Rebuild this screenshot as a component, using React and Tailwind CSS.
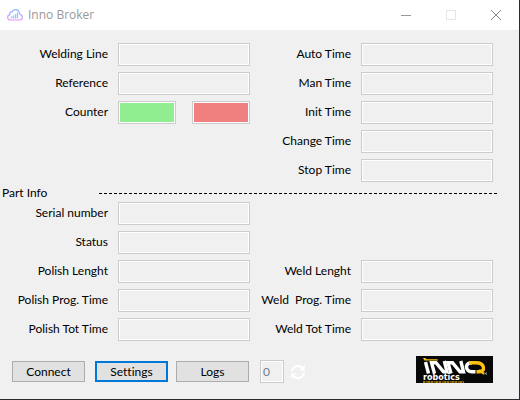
import React from "react";

const timeRows = [
  ["Welding Line", "Auto Time"],
  ["Reference", "Man Time"],
  ["Counter", "Init Time"],
  [null, "Change Time"],
  [null, "Stop Time"],
];

const partRows = [
  ["Serial number", null],
  ["Status", null],
  ["Polish Lenght", "Weld Lenght"],
  ["Polish Prog. Time", "Weld  Prog. Time"],
  ["Polish Tot Time", "Weld Tot Time"],
];

const box =
  "block h-[23px] min-w-0 rounded-none border border-[#cccccc] px-1 shadow-[inset_0_0_0_1px_#ffffff] outline-none";

function idFor(text) {
  return text.toLowerCase().replace(/[^a-z]+/g, "-");
}

function Field({ label }) {
  if (!label) {
    return (
      <>
        <span />
        <span />
      </>
    );
  }
  const id = idFor(label);
  return (
    <>
      <label htmlFor={id} className="pr-[10px] pb-[2px] text-right whitespace-pre">
        {label}
      </label>
      {label === "Counter" ? (
        <div className="flex gap-4">
          <input id={id} readOnly className={`${box} w-0 flex-1 bg-[#90ee90]`} />
          <input aria-label="Rejected counter" readOnly className={`${box} w-0 flex-1 bg-[#f08080]`} />
        </div>
      ) : (
        <input id={id} readOnly className={`${box} w-full bg-[#f0f0f0]`} />
      )}
    </>
  );
}

function FieldGrid({ rows }) {
  return (
    <div className="grid grid-cols-[118px_1fr_111px_1fr] items-center gap-y-[6px] pr-[26px]">
      {rows.map(([left, right], i) => (
        <React.Fragment key={i}>
          <Field label={left} />
          <Field label={right} />
        </React.Fragment>
      ))}
    </div>
  );
}

function CloudIcon() {
  return (
    <svg width="16" height="12" viewBox="0 0 16 12" fill="none" aria-hidden="true">
      <defs>
        <linearGradient id="cloud" x1="0" y1="0" x2="0" y2="12" gradientUnits="userSpaceOnUse">
          <stop stopColor="#7fb4ff" />
          <stop offset="0.5" stopColor="#b0a4fc" />
          <stop offset="1" stopColor="#ee94fa" />
        </linearGradient>
      </defs>
      <path
        d="M3.400 11C1.600 11 .7 9.900.7 8.300c0-1.500.8-2.300 1.900-2.600C2.400 4 3.300 2.800 4.900 2.900 5.600 1.400 6.800.7 8.400.7c2.200 0 3.600 1.300 4 3.300.1.700.3 1.100.8 1.400 1.400.4 2.100 1.400 2.100 2.700 0 1.800-1.100 2.900-2.700 2.900z"
        fill="#ffffff"
        stroke="url(#cloud)"
        strokeWidth="1.200"
      />
      <path d="M4.500 9.500V7.500M6.500 9.500V6.500M8.500 9.500V5M10.500 9.500V3.500" stroke="#a3c6fa" strokeWidth="1.400" />
    </svg>
  );
}

function InnoLogo() {
  return (
    <svg width="77" height="27" viewBox="0 0 77 27" role="img" aria-label="Inno robotics">
      <rect width="77" height="27" fill="#080808" />
      <path d="M7 2l1.500 2.500h13.500l-.6-1.200H10.500L9.500 2z" fill="#ffc20e" />
      <g stroke="#ffffff" strokeWidth="3.400" fill="none">
        <path d="M9.500 6l3 11.500" />
        <path d="M18.500 17.500L15.500 6.700H20L27.500 15.800H31L28.300 5" />
        <path d="M35 17.500L32 6.700H36.500L44 15.800H47.500L44.800 5" />
      </g>
      <path
        d="M59.500 15.800H56C51.500 15.800 49.500 11.500 51 8.800 51.900 7.200 53.500 6.700 56 6.700"
        fill="none"
        stroke="#ffffff"
        strokeWidth="3.400"
      />
      <path
        d="M53 6.700H60c4 0 6.800 1.600 7.400 4.400.7 3.200-1.400 4.700-5 4.700H60.500"
        fill="none"
        stroke="#ffc20e"
        strokeWidth="3.400"
      />
      <path d="M63 14l5 4" stroke="#ffc20e" strokeWidth="2.200" />
      <path d="M68.500 16.500l2.500 2m0-2l-2.500 2" stroke="#b0b0b0" strokeWidth=".8" />
      <text x="7" y="24" fill="#ffffff" fontFamily="DejaVu Sans, sans-serif" fontWeight="bold" fontSize="8">
        robotics
      </text>
      <path d="M7 26h41" stroke="#c8960c" strokeWidth="1.500" strokeDasharray="2 .7 1 .7 3 .6" />
    </svg>
  );
}

export default function App() {
  return (
    <main className="flex min-h-screen w-full flex-col border-r border-b border-[#2b2b2e] bg-[#f0f0f0] font-['Lato','Open_Sans',sans-serif] text-[12px] leading-4 text-black [font-variant-ligatures:none]">
      <header className="flex h-[30px] items-center bg-white pl-[7px] text-[#999999]">
        <CloudIcon />
        <h1 className="ml-[5px] flex-1 font-['Open_Sans',sans-serif]">Inno Broker</h1>
        <button aria-label="Minimize" className="flex h-[30px] w-[45px] items-center justify-center">
          <svg width="10" height="10" viewBox="0 0 10 10" stroke="#999999">
            <path d="M0 5.500h10" />
          </svg>
        </button>
        <button aria-label="Maximize" disabled className="flex h-[30px] w-[45px] items-center justify-center">
          <svg width="10" height="10" viewBox="0 0 10 10" fill="none" stroke="#e5e5e5">
            <path d="M.5.5h9v9h-9z" />
          </svg>
        </button>
        <button aria-label="Close" className="mr-px flex h-[30px] w-[45px] items-center justify-center">
          <svg width="10" height="10" viewBox="0 0 10 10" stroke="#888888">
            <path d="M0 0l10 10M10 0L0 10" />
          </svg>
        </button>
      </header>

      <form className="pt-[13px]">
        <FieldGrid rows={timeRows} />
        <div className="flex h-5 items-center pt-[2px] pr-[22px] pl-[2px]">
          <h2 className="w-24">Part Info</h2>
          <div
            role="separator"
            className="h-px flex-1 bg-[repeating-linear-gradient(90deg,transparent_0_1px,#000_1px_4px,transparent_4px_5px)]"
          />
        </div>
        <FieldGrid rows={partRows} />

        <div className="mt-[15px] flex items-end pr-[26px] pl-3">
          <div className="flex h-[23px] flex-1 items-center">
            <button type="button" className="h-[21px] w-[73px] border border-[#adadad] bg-[#e1e1e1] leading-none">
              Connect
            </button>
            <button
              type="button"
              className="ml-[10px] h-[21px] w-[73px] border-2 border-[#0078d7] bg-[#e1e1e1] leading-none"
            >
              Settings
            </button>
            <button type="button" className="ml-2 h-[21px] w-[73px] border border-[#adadad] bg-[#e1e1e1] leading-none">
              Logs
            </button>
            <input
              aria-label="Log count"
              defaultValue="0"
              disabled
              className="ml-[11px] h-[23px] w-6 border border-[#cccccc] bg-[#f0f0f0] px-[2px] text-[#6d7f92] shadow-[inset_0_0_0_1px_#ffffff]"
            />
            <button type="button" aria-label="Refresh" className="ml-[6px]">
              <svg width="16" height="16" viewBox="0 0 16 16" fill="none" stroke="#ffffff" strokeWidth="2">
                <path d="M2 7.500A6 6 0 0 1 12.500 4M14 8.500A6 6 0 0 1 3.500 12" />
                <path d="M14.800 1v5.500H9.500zM1.200 15V9.500h5.300z" fill="#ffffff" stroke="none" />
              </svg>
            </button>
          </div>
          <InnoLogo />
        </div>
      </form>
    </main>
  );
}
